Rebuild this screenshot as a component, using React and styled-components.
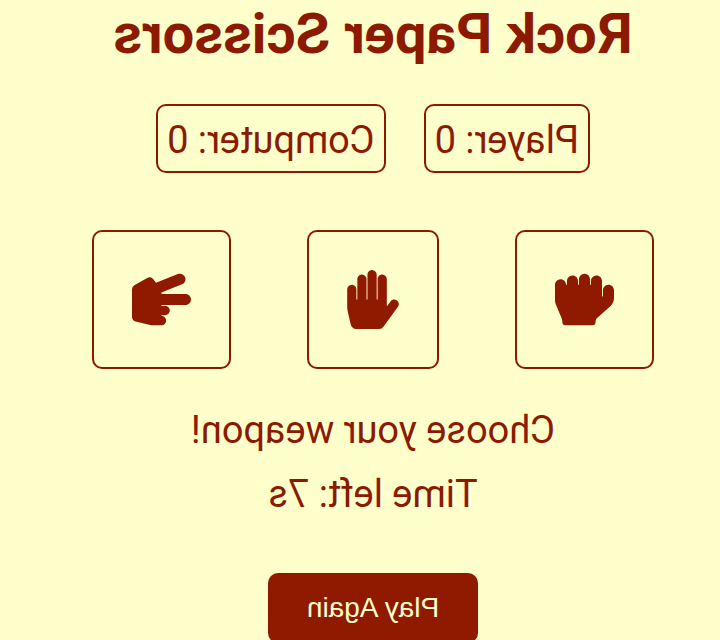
import React, { useState } from 'react';
import styled, { createGlobalStyle } from 'styled-components';
import { FaHandRock, FaHandPaper, FaHandScissors } from 'react-icons/fa';

const GlobalStyle = createGlobalStyle`
  body {
    margin: 0;
    background: #ffffcc;
    color: #8b1a00;
    font-family: Roboto, Arial, sans-serif;
    overflow: hidden;
  }
`

const Game = styled.main`
  display: flex;
  flex-direction: column;
  align-items: center;
  padding-right: 26px;
  transform: scaleX(-1);
`

const Title = styled.h1`
  margin: 0;
  font-size: 56px;
  line-height: 68px;
  font-weight: 700;
`

const Scores = styled.div`
  display: flex;
  gap: 38px;
  margin-top: 36px;
`

const Score = styled.div`
  padding: 11px 9px 8px;
  border: 2px solid #8b1a00;
  border-radius: 10px;
  font-size: 38px;
  line-height: 46px;
`

const Choices = styled.div`
  display: flex;
  gap: 76px;
  margin-top: 57px;
`

const Choice = styled.button`
  display: flex;
  padding: 38px;
  border: 2px solid #8b1a00;
  border-radius: 10px;
  background: none;
  color: #901a00;
  cursor: pointer;
  svg {
    width: ${({$iconWidth}) => $iconWidth}px;
    height: 59px;
  }
`

const Message = styled.p`
  margin: 18px 0 0;
  font-size: 38px;
  line-height: 46px;
`

const Messages = styled.div`
  margin-top: 38px;
  text-align: center;
  ${Message}:first-child {
    margin-top: 0;
  }
`

const PlayAgain = styled.button`
  margin-top: 56px;
  padding: 19px 39px;
  border: none;
  border-radius: 10px;
  background: #901a00;
  color: #ffffcc;
  font-family: "Liberation Sans", Arial, sans-serif;
  font-size: 28px;
  line-height: 32px;
  cursor: pointer;
`

const weapons = [
  { name: 'Rock', Icon: FaHandRock, width: 59 },
  { name: 'Paper', Icon: FaHandPaper, width: 52 },
  { name: 'Scissors', Icon: FaHandScissors, width: 59 },
]

function App(){
  const [score, setScore] = useState({ player: 0, computer: 0 })
  const [message, setMessage] = useState('Choose your weapon!')

  function play(pick){
    const house = Math.floor(Math.random() * 3)
    const result = (pick - house + 3) % 3
    if (result === 0) {
      setMessage('Draw!')
    } else if (result === 1) {
      setMessage('You win!')
      setScore({ ...score, player: score.player + 1 })
    } else {
      setMessage('You lose!')
      setScore({ ...score, computer: score.computer + 1 })
    }
  }
  function reset(){
    setScore({ player: 0, computer: 0 })
    setMessage('Choose your weapon!')
  }

  return(
    <>
      <GlobalStyle/>
      <Game>
        <Title>Rock Paper Scissors</Title>
        <Scores>
          <Score>Player: {score.player}</Score>
          <Score>Computer: {score.computer}</Score>
        </Scores>
        <Choices>
          {weapons.map(({ name, Icon, width }, i) => (
            <Choice key={name} aria-label={name} $iconWidth={width} onClick={() => play(i)}>
              <Icon/>
            </Choice>
          ))}
        </Choices>
        <Messages>
          <Message>{message}</Message>
          <Message>Time left: 7s</Message>
        </Messages>
        <PlayAgain onClick={reset}>Play Again</PlayAgain>
      </Game>
    </>
  )
}

export default App
